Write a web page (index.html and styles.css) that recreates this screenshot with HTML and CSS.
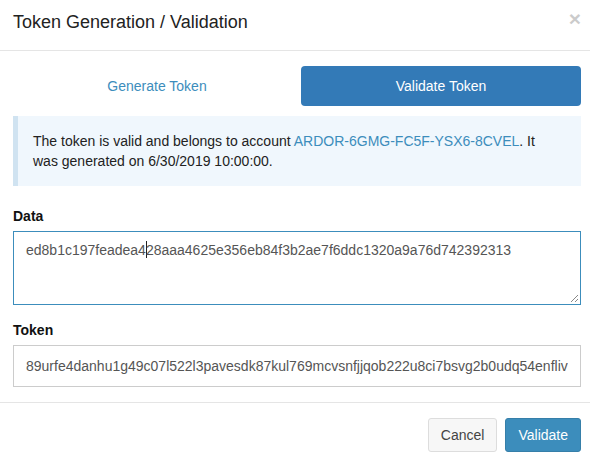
FILE: index.html
```html
<!DOCTYPE html>
<html lang="en">
<head>
<meta charset="utf-8">
<title>Token Generation / Validation</title>
<link rel="stylesheet" href="styles.css">
</head>
<body>
<div class="modal">
  <div class="modal-header">
    <h4 class="modal-title">Token Generation / Validation</h4>
    <button class="close" type="button" aria-label="Close">&times;</button>
  </div>
  <div class="modal-body">
    <div class="tabs">
      <button class="tab" type="button">Generate Token</button>
      <button class="tab active" type="button">Validate Token</button>
    </div>
    <div class="callout">
      The token is valid and belongs to account <a class="link" href="#">ARDOR-6GMG-FC5F-YSX6-8CVEL</a>. It was generated on 6/30/2019 10:00:00.
    </div>
    <div class="form-group first">
      <label class="label">Data</label>
      <div class="textarea" role="textbox">ed8b1c197feadea4<span class="caret"></span>28aaa4625e356eb84f3b2ae7f6ddc1320a9a76d742392313<svg class="grip" width="9" height="9" viewBox="0 0 9 9"><path d="M8 1 L1 8 M8 5 L5 8" stroke="#888" stroke-width="1" fill="none"/></svg></div>
    </div>
    <div class="form-group">
      <label class="label">Token</label>
      <input class="input" type="text" value="89urfe4danhu1g49c07l522l3pavesdk87kul769mcvsnfjjqob222u8ci7bsvg2b0udq54enfliv">
    </div>
  </div>
  <div class="modal-footer">
    <button class="btn btn-default" type="button">Cancel</button>
    <button class="btn btn-primary" type="button">Validate</button>
  </div>
</div>
</body>
</html>
```

FILE: styles.css
```css
html, body {
  margin: 0;
  padding: 0;
  background: #fff;
}
body {
  font-family: "Liberation Sans", Arial, sans-serif;
  font-size: 14px;
  line-height: 20px;
  color: #333;
}
.modal {
  width: 590px;
}
.modal-header {
  height: 51px;
  box-sizing: border-box;
  padding: 9px 9px 0 13px;
  border-bottom: 1px solid #e5e5e5;
  display: flex;
  justify-content: space-between;
  align-items: flex-start;
}
.modal-title {
  margin: 0;
  font-size: 18px;
  line-height: 26px;
  font-weight: normal;
  color: #222;
}
.close {
  margin: -1px 0 0 0;
  padding: 0;
  border: 0;
  background: none;
  font-family: "Liberation Sans", Arial, sans-serif;
  font-size: 21px;
  font-weight: bold;
  line-height: 21px;
  color: #000;
  opacity: 0.2;
}
.modal-body {
  padding: 15px 9px 15px 13px;
}
.tabs {
  display: grid;
  grid-template-columns: 288px 280px;
  height: 40px;
}
.tab {
  border: 0;
  background: transparent;
  font-family: inherit;
  font-size: 14px;
  line-height: 20px;
  padding: 10px 15px;
  color: #3c8dbc;
  border-radius: 4px;
}
.tab.active {
  background: #337ab7;
  color: #fff;
}
.callout {
  margin-top: 10px;
  padding: 15px 40px 15px 15px;
  border-left: 5px solid #d0e3f1;
  background: #f0f7fd;
  color: #222;
}
.link {
  color: #3c8dbc;
  text-decoration: none;
}
.form-group {
  margin-top: 15px;
}
.form-group.first {
  margin-top: 20px;
}
.label {
  display: block;
  font-weight: bold;
  color: #111;
  margin-bottom: 5px;
}
.textarea {
  position: relative;
  height: 74px;
  box-sizing: border-box;
  border: 1px solid #3c8dbc;
  padding: 8px 12px;
  color: #555;
  word-break: break-all;
}
.caret {
  display: inline-block;
  width: 1px;
  height: 17px;
  margin-right: -1px;
  background: #222;
  vertical-align: -3px;
}
.grip {
  position: absolute;
  right: 1px;
  bottom: 1px;
}
.input {
  display: block;
  width: 100%;
  height: 42px;
  box-sizing: border-box;
  border: 1px solid #ccc;
  border-radius: 0;
  padding: 10px 12px;
  font-family: inherit;
  font-size: 14px;
  line-height: 20px;
  color: #555;
  outline: none;
}
.modal-footer {
  border-top: 1px solid #e5e5e5;
  padding: 15px 9px 15px 13px;
  display: flex;
  justify-content: flex-end;
  gap: 8px;
}
.btn {
  height: 34px;
  box-sizing: border-box;
  padding: 6px 12px;
  border: 1px solid transparent;
  border-radius: 3px;
  font-family: inherit;
  font-size: 14px;
  line-height: 20px;
}
.btn-default {
  background: #f7f7f7;
  border-color: #ddd;
  color: #444;
}
.btn-primary {
  background: #3c8dbc;
  border-color: #367fa9;
  color: #fff;
}
```
